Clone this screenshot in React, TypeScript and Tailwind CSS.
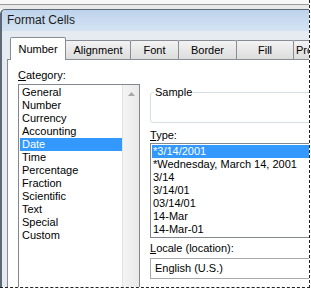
const categories = [
  'General',
  'Number',
  'Currency',
  'Accounting',
  'Date',
  'Time',
  'Percentage',
  'Fraction',
  'Scientific',
  'Text',
  'Special',
  'Custom',
];

const types = [
  '*3/14/2001',
  '*Wednesday, March 14, 2001',
  '3/14',
  '3/14/01',
  '03/14/01',
  '14-Mar',
  '14-Mar-01',
];

const tabs = [
  { label: 'Number', w: 'w-[56px]' },
  { label: 'Alignment', w: 'w-[66px]' },
  { label: 'Font', w: 'w-[49px]' },
  { label: 'Border', w: 'w-[59px]' },
  { label: 'Fill', w: 'w-[58px]' },
];

const App = () => {
  return (
    <div className="w-[310px] h-[288px] overflow-hidden bg-white border-r border-b border-dashed border-[#222] flex flex-col font-['Liberation_Sans',Arial,sans-serif] text-[11px] leading-[13px] text-black">
      {/* strip of the window behind */}
      <div className="h-[9px] shrink-0 bg-[#f1f1f1] flex flex-col">
        <div className="h-[4px] bg-[#f7f7f7]" />
        <div className="h-px bg-[#9a9a9a]" />
        <div className="flex-1 bg-[#e9e9e9]" />
      </div>

      {/* dialog window */}
      <div className="flex-1 flex flex-col border-l-2 border-t border-[#5d6976] rounded-tl-[5px] overflow-hidden">
        <div className="h-[21px] shrink-0 pl-[5px] flex items-center bg-gradient-to-b from-[#bed4ec] to-[#d4e3f3] text-[12px] text-[#1b1b1b]">
          Format Cells
        </div>

        <div className="flex-1 flex flex-col bg-[#e6ebf1] pl-[5px] pt-[6px]">
          {/* tabs */}
          <div className="h-[22px] shrink-0 flex items-end pl-[3px]">
            {tabs.map((t, i) =>
              i === 0 ? (
                <div
                  key={t.label}
                  className={`${t.w} h-[23px] -mb-px relative z-10 shrink-0 flex items-center justify-center bg-white border border-b-0 border-[#898c95] rounded-t-[2px]`}
                >
                  {t.label}
                </div>
              ) : (
                <div
                  key={t.label}
                  className={`${t.w} h-[19px] -ml-px shrink-0 flex items-center justify-center bg-gradient-to-b from-[#f3f3f3] to-[#dcdcdc] border border-b-0 border-[#898c95] rounded-t-[2px]`}
                >
                  {t.label}
                </div>
              )
            )}
            <div className="w-[64px] h-[19px] -ml-px shrink-0 flex items-center pl-[2px] bg-gradient-to-b from-[#f3f3f3] to-[#dcdcdc] border border-b-0 border-[#898c95] rounded-t-[2px] whitespace-nowrap">
              Protection
            </div>
          </div>

          {/* tab page */}
          <div className="flex-1 flex bg-white border-t border-l border-[#898c95]">
            {/* left column */}
            <div className="ml-[10px] w-[122px] shrink-0 pt-[9px] flex flex-col">
              <div className="h-[13px]">
                <span className="underline">C</span>ategory:
              </div>
              <div className="mt-[2px] h-[220px] flex border border-[#828790]">
                <div className="flex-1 pt-px pl-px">
                  {categories.map((c) => (
                    <div
                      key={c}
                      className={
                        c === 'Date'
                          ? 'h-[13px] pl-[2px] bg-[#3399ff] text-white'
                          : 'h-[13px] pl-[2px]'
                      }
                    >
                      {c}
                    </div>
                  ))}
                </div>
                <div className="w-[17px] shrink-0 bg-gradient-to-r from-[#f4f4f4] to-[#e9e9e9] border-l border-[#e2e2e2] flex justify-center pt-[7px]">
                  <svg width="7" height="4" viewBox="0 0 7 4">
                    <path d="M0 4 L3.5 0 L7 4 Z" fill="#a7a7a7" />
                  </svg>
                </div>
              </div>
            </div>

            {/* right column */}
            <div className="ml-[10px] w-[200px] shrink-0 pt-[26px] flex flex-col">
              <fieldset className="h-[37px] border border-[#d5dfe5] rounded-[3px]">
                <legend className="ml-[3px] px-px leading-[13px]">Sample</legend>
              </fieldset>

              <div className="mt-[6px] h-[13px]">
                <span className="underline">T</span>ype:
              </div>
              <div className="mt-px h-[95px] border border-[#828790] p-px whitespace-nowrap">
                {types.map((t, i) => (
                  <div
                    key={t}
                    className={
                      i === 0
                        ? 'h-[13px] pl-px bg-[#3399ff] text-white'
                        : 'h-[13px] pl-px'
                    }
                  >
                    {t}
                  </div>
                ))}
              </div>

              <div className="mt-[4px] h-[13px]">
                <span className="underline">L</span>ocale (location):
              </div>
              <div className="mt-[3px] h-[21px] border border-[#a7a9ae] pl-[4px] flex items-center">
                English (U.S.)
              </div>
            </div>
          </div>
        </div>
      </div>
    </div>
  );
};

export default App;
